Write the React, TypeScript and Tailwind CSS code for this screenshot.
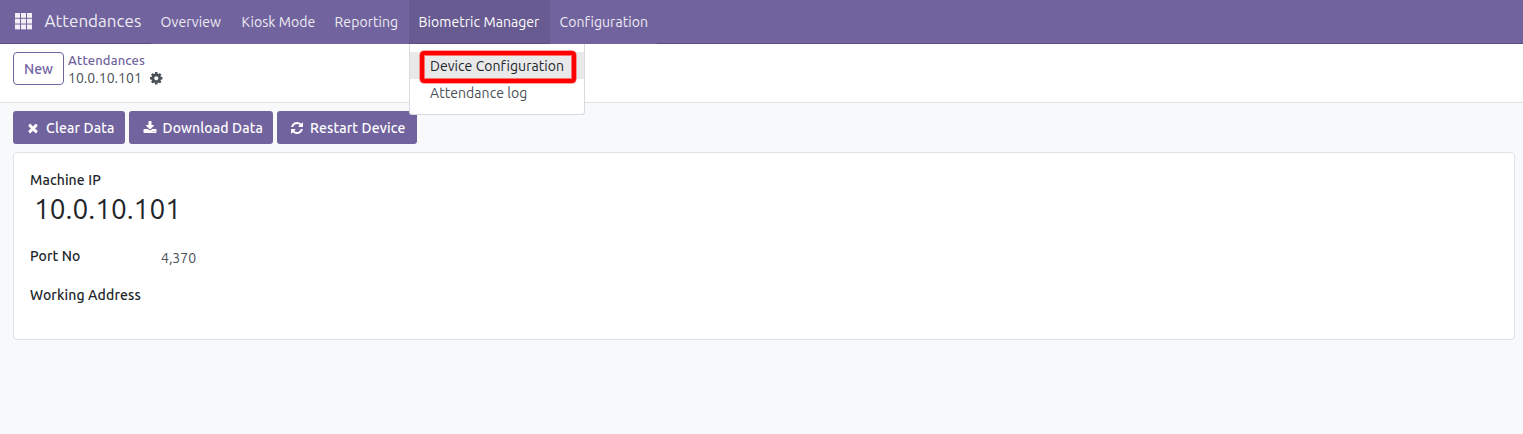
import React from "react";

const PATHS = {
  cog: "M1152 896q0-106-75-181t-181-75-181 75-75 181 75 181 181 75 181-75 75-181zm512-109v222q0 12-8 23t-20 13l-185 28q-19 54-39 91 35 50 107 138 10 12 10 25t-9 23q-27 37-99 108t-94 71q-12 0-26-9l-138-108q-44 23-91 38-16 136-29 186-7 28-36 28h-222q-14 0-24.5-8.5t-11.5-21.5l-28-184q-49-16-90-37l-141 107q-10 9-25 9-14 0-25-11-126-114-165-168-7-10-7-23 0-12 8-23 15-21 51-66.5t54-70.5q-27-50-41-99l-183-27q-13-2-21-12.5t-8-23.5v-222q0-12 8-23t19-13l186-28q14-46 39-92-40-57-107-138-10-12-10-24 0-10 9-23 26-36 98.5-107.5t94.5-71.5q13 0 26 10l138 107q44-23 91-38 16-136 29-186 7-28 36-28h222q14 0 24.5 8.5t11.5 21.5l28 184q49 16 90 37l142-107q9-9 24-9 13 0 25 10 129 119 165 170 7 8 7 22 0 12-8 23-15 21-51 66.5t-54 70.5q26 50 41 98l183 28q13 2 21 12.5t8 23.5z",
  times: "M1490 1322q0 40-28 68l-136 136q-28 28-68 28t-68-28l-294-294-294 294q-28 28-68 28t-68-28l-136-136q-28-28-28-68t28-68l294-294-294-294q-28-28-28-68t28-68l136-136q28-28 68-28t68 28l294 294 294-294q28-28 68-28t68 28l136 136q28 28 28 68t-28 68l-294 294 294 294q28 28 28 68z",
  download: "M1344 1344q0-26-19-45t-45-19-45 19-19 45 19 45 45 19 45-19 19-45zm256 0q0-26-19-45t-45-19-45 19-19 45 19 45 45 19 45-19 19-45zm128-224v320q0 40-28 68t-68 28h-1472q-40 0-68-28t-28-68v-320q0-40 28-68t68-28h465l135 136q58 56 136 56t136-56l136-136h464q40 0 68 28t28 68zm-325-569q17 41-14 70l-448 448q-18 19-45 19t-45-19l-448-448q-31-29-14-70 17-39 59-39h256v-448q0-26 19-45t45-19h256q26 0 45 19t19 45v448h256q42 0 59 39z",
  refresh: "M1639 1056q0 5-1 7-64 268-268 434.5t-478 166.5q-146 0-282.5-55t-243.5-157l-129 129q-19 19-45 19t-45-19-19-45v-448q0-26 19-45t45-19h448q26 0 45 19t19 45-19 45l-137 137q71 66 161 102t187 36q134 0 250-65t186-179q11-17 53-117 8-23 30-23h192q13 0 22.5 9.5t9.5 22.5zm25-800v448q0 26-19 45t-45 19h-448q-26 0-45-19t-19-45 19-45l138-138q-148-137-349-137-134 0-250 65t-186 179q-11 17-53 117-8 23-30 23h-199q-13 0-22.5-9.5t-9.5-22.5v-7q65-268 270-434.5t480-166.5q146 0 284 55.5t245 156.5l130-129q19-19 45-19t45 19 19 45z",
};

function Icon({ name, className }: { name: keyof typeof PATHS; className: string }) {
  return (
    <svg viewBox="0 0 1792 1792" fill="currentColor" className={className}>
      <path d={PATHS[name]} />
    </svg>
  );
}

function AppsIcon() {
  const cells = [0, 6, 12];
  return (
    <svg width="17" height="17" viewBox="0 0 17 17" fill="#f1eff5" className="ml-[15px] mt-[13px] shrink-0">
      {cells.map((x) => cells.map((y) => <rect key={`${x}-${y}`} x={x} y={y * 0.96} width="5" height="4.8" />))}
    </svg>
  );
}

const NAV = [
  { label: "Overview", style: "w-[81px]" },
  { label: "Kiosk Mode", style: "w-[93px]" },
  { label: "Reporting", style: "w-[84px]" },
  { label: "Biometric Manager", style: "w-[141px]", active: true },
  { label: "Configuration", style: "w-[107px]" },
];

const ACTIONS = [
  { label: "Clear Data", icon: "times", style: "w-[112px]", iconStyle: "size-[14px] ml-[13px] mr-[6px]" },
  { label: "Download Data", icon: "download", style: "w-[144px]", iconStyle: "size-[14px] ml-[13.5px] mr-[6px]" },
  { label: "Restart Device", icon: "refresh", style: "w-[140px]", iconStyle: "size-[14px] ml-[13px] mr-[6px]" },
] as const;

function DeviceMenu() {
  return (
    <div className="absolute left-0 top-[44px] z-10 h-[71px] w-[176px] rounded-b-[3px] border border-t-0 border-[#d8dadd] bg-white pt-[8px] text-[#495057]">
      <div className="relative flex h-[27px] items-center bg-[#e9e9e9] pl-5 text-[#212529]">
        <span className="pt-px tracking-[0.06px]">Device Configuration</span>
        <div className="absolute -top-[1.5px] left-[9.5px] h-[32px] w-[156px] rounded-[4px] border-4 border-[#fe0000] shadow-[0_0_0_0.5px_#ff4040,inset_0_0_0_1px_#fb7070]" />
      </div>
      <div className="flex h-[27px] items-center pl-5">
        <span className="pt-px tracking-[0.06px]">Attendance log</span>
      </div>
    </div>
  );
}

export default function App() {
  return (
    <div className="flex h-[434px] w-[1523px] flex-col overflow-hidden bg-[#f8f9fa] font-['Ubuntu','Noto_Sans',sans-serif] text-[14px] leading-[21px] text-[#212529]">
      <header className="flex h-[44px] shrink-0 bg-[#71639e] text-[#eeecf3]">
        <div className="flex w-[151px] border-b border-[#5a4f7f]">
          <AppsIcon />
          <span className="ml-[12.5px] mt-[9px] text-[17px] leading-[24px] tracking-[0.03px] whitespace-nowrap">Attendances</span>
        </div>
        {NAV.map((item) => (
          <div
            key={item.label}
            className={`relative shrink-0 whitespace-nowrap pl-[9.6px] pt-[12px] tracking-[0.06px] ${item.style} ${
              item.active ? "border-b border-[#5a4f7f] bg-[#685b91] text-white" : ""
            }`}
          >
            {item.label}
            {item.active && <DeviceMenu />}
          </div>
        ))}
        <div className="flex-1 border-b border-[#5a4f7f]" />
      </header>

      <section className="flex h-[59px] shrink-0 border-b border-[#dee2e6] bg-white pl-[13px] pt-[8px]">
        <button className="flex h-[33px] w-[51px] items-center justify-center rounded-[4px] border border-[#71639e] pt-[2px] font-medium text-[#71639e]">
          New
        </button>
        <div className="ml-[4px] flex flex-col whitespace-nowrap">
          <span className="text-[13px] font-medium leading-[17px] tracking-[0.15px] text-[#71639e]">Attendances</span>
          <div className="flex items-center leading-[18px] text-[#495057]">
            <span className="w-[80.5px] tracking-[0.03px]">10.0.10.101</span>
            <Icon name="cog" className="size-[14.5px]" />
          </div>
        </div>
      </section>

      <main className="flex flex-1 flex-col pl-[13px] pr-[8px] pt-[8px]">
        <div className="flex gap-1">
          {ACTIONS.map((a) => (
            <button
              key={a.label}
              className={`flex h-[33px] items-center whitespace-nowrap rounded-[3px] bg-[#71639e] font-medium tracking-[0.14px] text-white ${a.style}`}
            >
              <Icon name={a.icon} className={a.iconStyle} />
              <span className="pt-[2px]">{a.label}</span>
            </button>
          ))}
        </div>

        <div className="mt-[8px] flex h-[188px] flex-col rounded-[4px] border border-[#dee2e6] bg-white pl-[16px] pt-[17px]">
          <label className="font-medium leading-[21px] tracking-[0.12px]">Machine IP</label>
          <div className="ml-[4px] h-[38px] text-[28px] leading-[36px]">10.0.10.101</div>
          <div className="mt-[17px] flex h-[21px]">
            <label className="w-[131px] font-medium tracking-[0.12px]">Port No</label>
            <span className="mt-[2px] text-[#495057]">4,370</span>
          </div>
          <label className="mt-[18px] font-medium tracking-[0.13px]">Working Address</label>
        </div>
      </main>
    </div>
  );
}
